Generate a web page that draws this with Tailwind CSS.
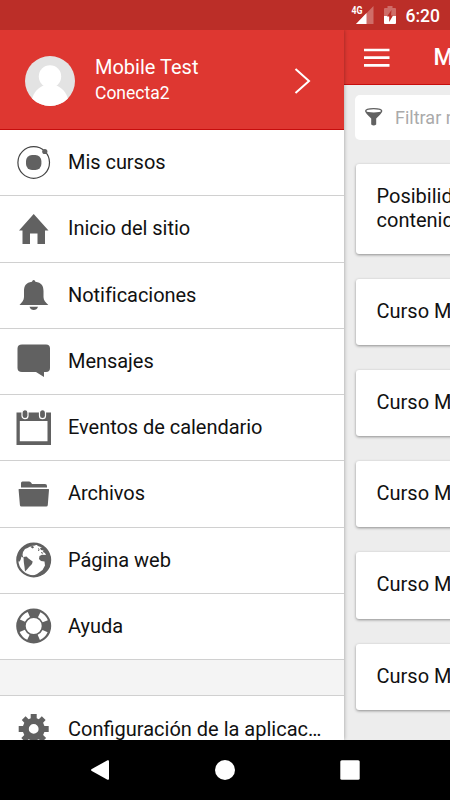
<!DOCTYPE html>
<html lang="es">
<head>
<meta charset="utf-8">
<title>Conecta2</title>
<script src="https://cdn.jsdelivr.net/npm/@tailwindcss/browser@4"></script>
</head>
<body class="font-['Roboto',sans-serif] text-[20px] leading-6 text-[#111]">
<div class="w-[450px] h-[800px] flex flex-col overflow-hidden">
  <div class="h-[30px] shrink-0 bg-[#bb2e28] text-white flex items-center justify-end">
    <svg class="w-[24px] h-[30px] shrink-0" viewBox="0 0 24 30" fill="#fff"><path d="M22.500 6v18H5z" opacity=".3"/><path d="M15.500 13V24H5z"/><text x="0.500" y="14" font-size="10" font-weight="700" textLength="11" lengthAdjust="spacingAndGlyphs" stroke="#bb2e28" stroke-width="1.500" paint-order="stroke">4G</text></svg>
    <svg class="w-[12px] h-[30px] shrink-0 ml-[9px] mr-[9.500px]" viewBox="0 0 12 30" fill="#fff"><path d="M1 8h2.500V6h5v2H11q1 0 1 1v7H0V9q0-1 1-1z" opacity=".3"/><path d="M0 16h12v7q0 1-1 1H1q-1 0-1-1z"/><path d="M7.500 10L3 16.500H5.200v5.500L9 15.500H7z" fill="#bb2e28"/></svg>
    <span class="text-[17.500px] font-medium w-[44.500px] pt-[1px] whitespace-nowrap">6:20</span>
  </div>
  <div class="h-[710px] flex overflow-hidden">
    <nav class="w-[344px] shrink-0 bg-white relative z-10 shadow-[0_0_4px_rgba(0,0,0,0.35)]">
      <div class="h-[100px] bg-[#de3731] border-b border-[#c60d0d] flex items-center text-white pl-[25px] pt-[3px]">
        <svg class="w-[50px] h-[50px]" viewBox="0 0 50 50"><clipPath id="avatar"><circle cx="25" cy="25" r="25"/></clipPath><g clip-path="url(#avatar)"><path d="M0 0h50v50H0z" fill="#e3e3e3"/><circle cx="25" cy="20.500" r="11.200" fill="#fff"/><path d="M7 43C9 36 13 32 18.500 29.500h13C37 32 41 36 43 43v7H7z" fill="#fff"/></g></svg>
        <div class="ml-5 w-[199px]">
          <div class="text-[20px] leading-[25px] -mt-[1px]">Mobile Test</div>
          <div class="text-[17.500px] leading-[26px]">Conecta2</div>
        </div>
        <svg class="w-[17px] h-[26px]" viewBox="0 0 17 26" fill="none" stroke="#fff" stroke-width="2"><path d="M1.500 1L15 13 1.500 25"/></svg>
      </div>
      <div class="h-[66.250px] border-b border-[#d0d0d0] flex items-center gap-4 pl-4 whitespace-nowrap">
        <svg class="w-9 h-9" viewBox="0 0 36 36" fill="#616161"><circle cx="17.700" cy="17.500" r="15.800" fill="none" stroke="#444" stroke-width="1.200"/><rect x="10" y="10" width="15.400" height="15" rx="6"/><circle cx="28.800" cy="6.500" r="2.600"/></svg><span class="-mt-[1px] tracking-[-0.040px]">Mis cursos</span>
      </div>
      <div class="h-[66.250px] border-b border-[#d0d0d0] flex items-center gap-4 pl-4 whitespace-nowrap">
        <svg class="w-9 h-9" viewBox="0 0 36 36" fill="#616161"><path d="M17.700 3L32.500 19.500H29V33H21.500V22.500H14V33H6.500V19.500H3z"/></svg><span class="-mt-[1px] tracking-[-0.040px]">Inicio del sitio</span>
      </div>
      <div class="h-[66.250px] border-b border-[#d0d0d0] flex items-center gap-4 pl-4 whitespace-nowrap">
        <svg class="w-9 h-9" viewBox="0 0 36 36" fill="#616161"><path d="M17.700 3q1.300 0 1.700 1.800C25.500 5.600 27.500 9 27.500 14v6c0 3 2 5.500 4.800 8H3.500C6 25.500 8 23 8 20v-6c0-5 2-8.400 8-9.200Q16.400 3 17.700 3zM13.500 29.700h8.500q-1.200 3.300-4.250 3.300t-4.250-3.300z"/></svg><span class="-mt-[1px] tracking-[-0.040px]">Notificaciones</span>
      </div>
      <div class="h-[66.250px] border-b border-[#d0d0d0] flex items-center gap-4 pl-4 whitespace-nowrap">
        <svg class="w-9 h-9" viewBox="0 0 36 36" fill="#616161"><path d="M6 1.500h24q4 0 4 4V25q0 4-4 4h-2v5L20 29H6q-4.500 0-4.500-4V5.500q0-4 4.500-4z"/></svg><span class="-mt-[1px] tracking-[-0.040px]">Mensajes</span>
      </div>
      <div class="h-[66.250px] border-b border-[#d0d0d0] flex items-center gap-4 pl-4 whitespace-nowrap">
        <svg class="w-9 h-9 overflow-visible" viewBox="0 0 36 36" fill="#616161"><path fill-rule="evenodd" d="M.5 2.500H35V35H.5zM3.800 11V31.200H31.500V11z"/><rect x="6" y="-0.300" width="6" height="9" rx="3" stroke="#fff" stroke-width="1.200"/><rect x="23.500" y="-0.300" width="6" height="9" rx="3" stroke="#fff" stroke-width="1.200"/></svg><span class="-mt-[1px] tracking-[-0.040px]">Eventos de calendario</span>
      </div>
      <div class="h-[66.250px] border-b border-[#d0d0d0] flex items-center gap-4 pl-4 whitespace-nowrap">
        <svg class="w-9 h-9" viewBox="0 0 36 36" fill="#616161"><path d="M6.500 5.500h6.500q1 0 2 1l1 1.500h13q2 0 2 2v1.500H5V7q0-1.500 1.500-1.500zM3 13h29.500q.5 0 .5.700L31.800 29q-.1 1.500-1.600 1.500H5.500Q4 30.500 3.900 29L2.600 13.700Q2.500 13 3 13z"/></svg><span class="-mt-[1px] tracking-[-0.040px]">Archivos</span>
      </div>
      <div class="h-[66.250px] border-b border-[#d0d0d0] flex items-center gap-4 pl-4 whitespace-nowrap">
        <svg class="w-9 h-9" viewBox="0 0 36 36" fill="#616161"><circle cx="17.700" cy="18" r="16.400" fill="#fff" stroke="#616161" stroke-width="2.200"/><path d="M3 9L6 6 11 3 15 2 22 1.500 19 3.500 15 4 11.500 6 9 7 7 10 6.500 13 7.500 16 5.500 14.500 4.500 18 3 20 1 17z"/><path d="M7.500 15L10.500 14.500 12.500 16.500 16.700 19.500 16 22 13.500 24.500 11 27.500 9 29.500 8.500 25 7.800 20z"/><path d="M14 4.500L17 4 18 5.500 16.500 6.500zM20 2L27 3.500 32 8.500 35 17 33.500 25 28 32 20 35 15 34.500 21 32 26.500 28 29 23.500 28.500 19.500 25 19 23 17 23.500 14 26 12.700 30 13 29 11 27 10 27.500 8.500 25 8 24 6 26 5.500 22 4z"/><path d="M22 6.500l1.200 1-.8 1.500M25 10.500l2 .8" stroke="#616161" fill="none"/></svg><span class="-mt-[1px] tracking-[-0.040px]">Página web</span>
      </div>
      <div class="h-[66.250px] border-b border-[#d0d0d0] flex items-center gap-4 pl-4 whitespace-nowrap">
        <svg class="w-9 h-9" viewBox="0 0 36 36" fill="none"><circle cx="17.700" cy="18" r="12.750" stroke="#616161" stroke-width="9.500"/><circle cx="17.700" cy="18" r="12.500" stroke="#fff" stroke-width="5.600" stroke-dasharray="9 10.635" stroke-dashoffset="-5.300"/></svg><span class="-mt-[1px] tracking-[-0.040px]">Ayuda</span>
      </div>
      <div class="h-[36px] bg-[#f4f4f4] border-b border-[#d0d0d0]"></div>
      <div class="h-[66.250px] flex items-center gap-4 pl-4 whitespace-nowrap">
        <svg class="w-9 h-9" viewBox="0 0 36 36" fill="#616161"><path fill-rule="evenodd" d="M14.700 3h6v4.300l2.100.9 3-3 3.800 3.800-2.500 2.800 1.300 3.200h4.300v6h-4.300l-1.300 3 3 3-4.200 4.200-3-3-2.200.9V33h-6v-3.900l-2.200-.9-3 3-4.200-4.200 3-3-1.300-3H2.700v-6H7l1.300-3.200-2.500-2.800 3.800-3.800 3 3 2.100-.9zM17.700 13a4.900 4.900 0 1 0 0 9.800 4.900 4.900 0 0 0 0-9.800z"/></svg><span class="-mt-[1px]">Configuración de la aplicac…</span>
      </div>
    </nav>
    <main class="w-[106px] shrink-0 overflow-hidden bg-[#ededed] whitespace-nowrap">
      <div class="h-[55px] w-[420px] bg-[#de3731] border-b border-[#c60d0d] flex items-center pl-[19.500px] text-white">
        <svg class="w-[26px] h-[20px] mt-[2px]" viewBox="0 0 26 20" fill="none" stroke="#fff" stroke-width="2.700"><path d="M0 2h25.500M0 9.700h25.500M0 17.300h25.500"/></svg>
        <span class="ml-[44px] mt-[2px] text-[23px] font-medium">Mis cursos</span>
      </div>
      <div class="w-[400px] pl-[11px] pt-[10px]">
        <div class="h-[45px] bg-white rounded-[5px] flex items-center pl-[9px] text-[18px] text-[#aaa]">
          <svg class="w-[20px] h-[20px] -mt-[1px]" viewBox="0 0 20 20"><path d="M1 4Q1 1 9.700 1T18.400 4Q18 6 12.200 11.500v6q-2.500 2-5 0v-6Q1.400 6 1 4z" fill="#616161"/><ellipse cx="9.700" cy="3.900" rx="7.300" ry="1.700" fill="#fff"/></svg>
          <span class="ml-[11px]">Filtrar mis cursos</span>
        </div>
      </div>
      <div class="w-[400px] pl-3 pt-6 flex flex-col gap-[25px]">
        <div class="h-[89.500px] bg-white rounded-[3px] shadow-[0_1px_3px_rgba(0,0,0,0.4)] px-[20.500px] pt-[19.500px]">Posibilidades de<br>contenidos</div>
        <div class="h-[66.250px] bg-white rounded-[3px] shadow-[0_1px_3px_rgba(0,0,0,0.4)] px-[20.500px] pb-[2px] flex items-center">Curso Moodle</div>
        <div class="h-[66.250px] bg-white rounded-[3px] shadow-[0_1px_3px_rgba(0,0,0,0.4)] px-[20.500px] pb-[2px] flex items-center">Curso Moodle</div>
        <div class="h-[66.250px] bg-white rounded-[3px] shadow-[0_1px_3px_rgba(0,0,0,0.4)] px-[20.500px] pb-[2px] flex items-center">Curso Moodle</div>
        <div class="h-[66.250px] bg-white rounded-[3px] shadow-[0_1px_3px_rgba(0,0,0,0.4)] px-[20.500px] pb-[2px] flex items-center">Curso Moodle</div>
        <div class="h-[66.250px] bg-white rounded-[3px] shadow-[0_1px_3px_rgba(0,0,0,0.4)] px-[20.500px] pb-[2px] flex items-center">Curso Moodle</div>
      </div>
    </main>
  </div>
  <div class="h-[60px] shrink-0 bg-black flex items-center justify-center gap-[105px] relative z-20">
    <svg class="w-5 h-5" viewBox="0 0 20 20" fill="#fff"><path d="M17.500 0.300q1.500-.6 1.500 1v17.400q0 1.600-1.500 1L1.800 11q-1.600-1 0-2z"/></svg>
    <svg class="w-5 h-5" viewBox="0 0 20 20" fill="#fff"><circle cx="10" cy="10" r="10"/></svg>
    <svg class="w-5 h-5" viewBox="0 0 20 20" fill="#fff"><rect x="0.300" y="0.300" width="19.400" height="19.400" rx="1.500"/></svg>
  </div>
</div>
</body>
</html>
